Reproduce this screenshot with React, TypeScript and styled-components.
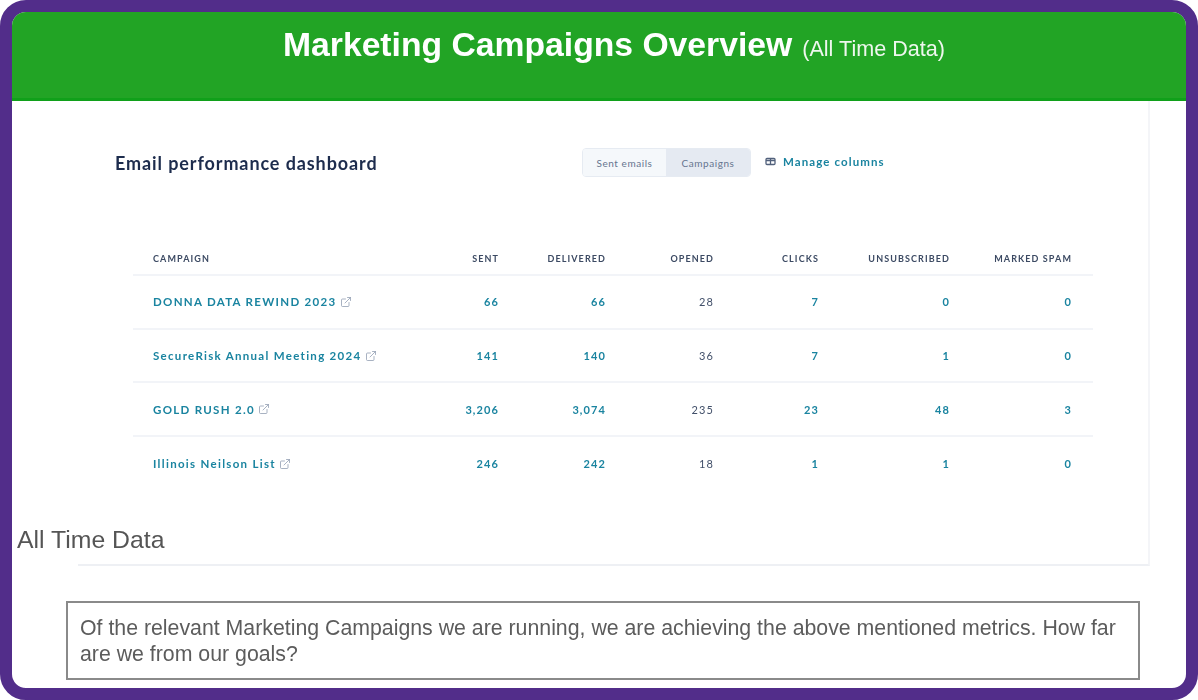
import styled, { createGlobalStyle } from 'styled-components';
import { ExternalLink } from 'lucide-react';

const GlobalStyle = createGlobalStyle`
  html, body {
    margin: 0;
    padding: 0;
    background: #fff;
  }
`;

const Frame = styled.div`
  box-sizing: border-box;
  width: 1198px;
  height: 700px;
  display: flex;
  flex-direction: column;
  border: 12px solid #522d8a;
  border-radius: 26px;
  background: #fff;
  overflow: hidden;
  font-family: 'Liberation Sans', Arial, sans-serif;
`;

const Banner = styled.header`
  box-sizing: border-box;
  flex: none;
  height: 89px;
  display: flex;
  justify-content: center;
  align-items: baseline;
  gap: 10px;
  padding: 12px 0 0 30px;
  background: #22a425;
  border-bottom: 3px solid #10a01a;
  color: #fff;
`;

const BannerTitle = styled.h1`
  margin: 0;
  font-size: 33.7px;
  line-height: 40px;
  font-weight: 700;
  filter: blur(0.35px);
`;

const BannerNote = styled.span`
  font-size: 21.6px;
  color: #eef7ee;
  filter: blur(0.35px);
`;

const Card = styled.section`
  position: relative;
  box-sizing: border-box;
  flex: none;
  width: 1072px;
  height: 465px;
  margin-left: 66px;
  padding: 0 0 0 37px;
  border-right: 2px solid #f4f5f8;
  border-bottom: 2px solid #eef0f4;
  font-family: Lato, 'Open Sans', sans-serif;
`;

const Blurred = styled.div`
  filter: blur(0.7px);
`;

const TopRow = styled.div`
  display: flex;
  align-items: center;
  height: 29px;
  padding-top: 47px;
`;

const CardTitle = styled.h2`
  width: 467px;
  margin: 0;
  font-size: 18px;
  font-weight: 700;
  letter-spacing: 0.9px;
  color: #1d2c4d;
`;

const Toggle = styled.div`
  display: flex;
  width: 169px;
  height: 29px;
  border-radius: 4px;
  border: 1px solid #e6ebf2;
  box-sizing: border-box;
  overflow: hidden;
`;

const ToggleOption = styled.div<{ $active?: boolean }>`
  flex: ${({ $active }) => ($active ? '0 0 84px' : '1')};
  display: flex;
  align-items: center;
  justify-content: center;
  font-size: 10px;
  letter-spacing: 0.55px;
  color: #66758f;
  background: ${({ $active }) => ($active ? '#e5eaf2' : '#f5f8fb')};
`;

const ManageLink = styled.div`
  display: flex;
  align-items: center;
  gap: 7px;
  margin: 0 0 2px 14px;
  font-size: 11.5px;
  font-weight: 700;
  letter-spacing: 1.1px;
  color: #1a84a0;

  svg {
    flex: none;
  }
`;

const Table = styled.div`
  width: 960px;
  margin: 65px 0 0 18px;
`;

const Row = styled.div<{ $head?: boolean; $last?: boolean }>`
  display: grid;
  grid-template-columns: 280px 107px 107px 108px 105px 131px 122px;
  align-items: center;
  height: ${({ $head }) => ($head ? '34px' : '53.7px')};
  box-sizing: border-box;
  border-bottom: ${({ $last }) => ($last ? 'none' : '2px solid #f2f4f8')};
`;

const HeadCell = styled.div<{ $left?: boolean }>`
  padding: ${({ $left }) => ($left ? '0 0 0 20px' : '0 21px 0 0')};
  text-align: ${({ $left }) => ($left ? 'left' : 'right')};
  font-size: 9px;
  font-weight: 700;
  letter-spacing: 1.1px;
  color: #3c4a63;
  white-space: nowrap;
`;

const NameCell = styled.div`
  display: flex;
  align-items: center;
  gap: 3px;
  padding-left: 20px;
  font-size: 11.5px;
  font-weight: 700;
  letter-spacing: 1.3px;
  color: #1a84a0;
  white-space: nowrap;

  svg {
    flex: none;
    color: #8b98ad;
  }
`;

const NumberCell = styled.div<{ $plain?: boolean }>`
  padding-right: 21px;
  text-align: right;
  font-size: 11px;
  font-weight: ${({ $plain }) => ($plain ? 400 : 700)};
  letter-spacing: 1.1px;
  color: ${({ $plain }) => ($plain ? '#42506a' : '#1a84a0')};
`;

const SideLabel = styled.div`
  position: absolute;
  left: -61px;
  top: 424px;
  font-family: 'Liberation Sans', Arial, sans-serif;
  font-size: 24.8px;
  line-height: 30px;
  color: #555;
  filter: blur(0.35px);
`;

const Question = styled.div`
  box-sizing: border-box;
  flex: none;
  width: 1074px;
  height: 79px;
  margin: 35px 0 0 54px;
  padding: 12px 12px 0;
  border: 2px solid #8a8a8a;
  font-size: 21.3px;
  line-height: 26px;
  color: #5c5c5c;
`;

const QuestionText = styled.p`
  margin: 0;
  filter: blur(0.35px);
`;

const ColumnsIcon = () => (
  <svg width="11" height="9" viewBox="0 0 11 9" fill="none" stroke="#52617c" strokeWidth="1.3">
    <rect x="1" y="1.5" width="9" height="6" rx="1" />
    <path d="M5.5 1.5v6M1 3.5h9" />
  </svg>
);

const headers = ['SENT', 'DELIVERED', 'OPENED', 'CLICKS', 'UNSUBSCRIBED', 'MARKED SPAM'];

const campaigns = [
  { name: 'DONNA DATA REWIND 2023', values: ['66', '66', '28', '7', '0', '0'] },
  { name: 'SecureRisk Annual Meeting 2024', values: ['141', '140', '36', '7', '1', '0'] },
  { name: 'GOLD RUSH 2.0', values: ['3,206', '3,074', '235', '23', '48', '3'] },
  { name: 'Illinois Neilson List', values: ['246', '242', '18', '1', '1', '0'] },
];

export default function App() {
  return (
    <>
      <GlobalStyle />
      <Frame>
        <Banner>
          <BannerTitle>Marketing Campaigns Overview</BannerTitle>
          <BannerNote>(All Time Data)</BannerNote>
        </Banner>
        <Card>
          <Blurred>
            <TopRow>
              <CardTitle>Email performance dashboard</CardTitle>
              <Toggle>
                <ToggleOption>Sent emails</ToggleOption>
                <ToggleOption $active>Campaigns</ToggleOption>
              </Toggle>
              <ManageLink>
                <ColumnsIcon />
                Manage columns
              </ManageLink>
            </TopRow>
            <Table>
              <Row $head>
                <HeadCell $left>CAMPAIGN</HeadCell>
                {headers.map((h) => (
                  <HeadCell key={h}>{h}</HeadCell>
                ))}
              </Row>
              {campaigns.map((c, i) => (
                <Row key={c.name} $last={i === campaigns.length - 1}>
                  <NameCell>
                    {c.name}
                    <ExternalLink size={12} strokeWidth={1.5} />
                  </NameCell>
                  {c.values.map((v, j) => (
                    <NumberCell key={j} $plain={j === 2}>
                      {v}
                    </NumberCell>
                  ))}
                </Row>
              ))}
            </Table>
          </Blurred>
          <SideLabel>All Time Data</SideLabel>
        </Card>
        <Question>
          <QuestionText>
            Of the relevant Marketing Campaigns we are running, we are achieving the above mentioned metrics. How far are we from our goals?
          </QuestionText>
        </Question>
      </Frame>
    </>
  );
}
